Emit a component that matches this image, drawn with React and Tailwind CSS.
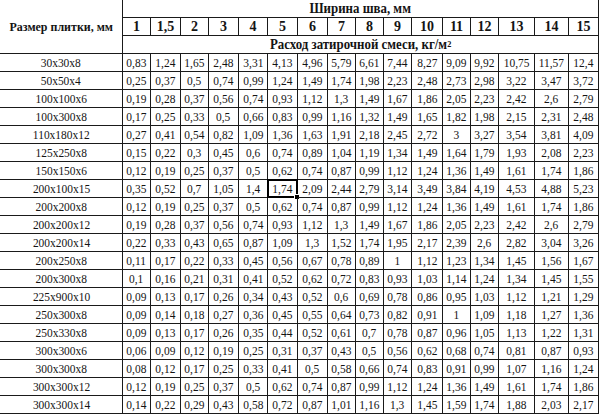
import React from "react";

const rows = [
  ["30x30x8", "0,83 1,24 1,65 2,48 3,31 4,13 4,96 5,79 6,61 7,44 8,27 9,09 9,92 10,75 11,57 12,4"],
  ["50x50x4", "0,25 0,37 0,5 0,74 0,99 1,24 1,49 1,74 1,98 2,23 2,48 2,73 2,98 3,22 3,47 3,72"],
  ["100x100x6", "0,19 0,28 0,37 0,56 0,74 0,93 1,12 1,3 1,49 1,67 1,86 2,05 2,23 2,42 2,6 2,79"],
  ["100x300x8", "0,17 0,25 0,33 0,5 0,66 0,83 0,99 1,16 1,32 1,49 1,65 1,82 1,98 2,15 2,31 2,48"],
  ["110x180x12", "0,27 0,41 0,54 0,82 1,09 1,36 1,63 1,91 2,18 2,45 2,72 3 3,27 3,54 3,81 4,09"],
  ["125x250x8", "0,15 0,22 0,3 0,45 0,6 0,74 0,89 1,04 1,19 1,34 1,49 1,64 1,79 1,93 2,08 2,23"],
  ["150x150x6", "0,12 0,19 0,25 0,37 0,5 0,62 0,74 0,87 0,99 1,12 1,24 1,36 1,49 1,61 1,74 1,86"],
  ["200x100x15", "0,35 0,52 0,7 1,05 1,4 1,74 2,09 2,44 2,79 3,14 3,49 3,84 4,19 4,53 4,88 5,23"],
  ["200x200x8", "0,12 0,19 0,25 0,37 0,5 0,62 0,74 0,87 0,99 1,12 1,24 1,36 1,49 1,61 1,74 1,86"],
  ["200x200x12", "0,19 0,28 0,37 0,56 0,74 0,93 1,12 1,3 1,49 1,67 1,86 2,05 2,23 2,42 2,6 2,79"],
  ["200x200x14", "0,22 0,33 0,43 0,65 0,87 1,09 1,3 1,52 1,74 1,95 2,17 2,39 2,6 2,82 3,04 3,26"],
  ["200x250x8", "0,11 0,17 0,22 0,33 0,45 0,56 0,67 0,78 0,89 1 1,12 1,23 1,34 1,45 1,56 1,67"],
  ["200x300x8", "0,1 0,16 0,21 0,31 0,41 0,52 0,62 0,72 0,83 0,93 1,03 1,14 1,24 1,34 1,45 1,55"],
  ["225x900x10", "0,09 0,13 0,17 0,26 0,34 0,43 0,52 0,6 0,69 0,78 0,86 0,95 1,03 1,12 1,21 1,29"],
  ["250x300x8", "0,09 0,14 0,18 0,27 0,36 0,45 0,55 0,64 0,73 0,82 0,91 1 1,09 1,18 1,27 1,36"],
  ["250x330x8", "0,09 0,13 0,17 0,26 0,35 0,44 0,52 0,61 0,7 0,78 0,87 0,96 1,05 1,13 1,22 1,31"],
  ["300x300x6", "0,06 0,09 0,12 0,19 0,25 0,31 0,37 0,43 0,5 0,56 0,62 0,68 0,74 0,81 0,87 0,93"],
  ["300x300x8", "0,08 0,12 0,17 0,25 0,33 0,41 0,5 0,58 0,66 0,74 0,83 0,91 0,99 1,07 1,16 1,24"],
  ["300x300x12", "0,12 0,19 0,25 0,37 0,5 0,62 0,74 0,87 0,99 1,12 1,24 1,36 1,49 1,61 1,74 1,86"],
  ["300x300x14", "0,14 0,22 0,29 0,43 0,58 0,72 0,87 1,01 1,16 1,3 1,45 1,59 1,74 1,88 2,03 2,17"],
];

const widths = ["1", "1,5", "2", "3", "4", "5", "6", "7", "8", "9", "10", "11", "12", "13", "14", "15"];

function T({ children }) {
  return <span className="inline-block scale-x-[0.88] whitespace-nowrap">{children}</span>;
}

function B({ children }) {
  return <span className="inline-block scale-x-[0.92] whitespace-nowrap font-bold">{children}</span>;
}

export default function App() {
  return (
    <div className="w-[600px] h-[415px] overflow-hidden bg-white text-[#141414] font-['Liberation_Serif',serif] text-[13px] leading-none">
      <div className="grid w-[599px] grid-cols-[123px_28px_30px_28px_30px_29px_30px_30px_28px_28px_28px_31px_28px_28px_36px_34px_30px] grid-rows-[18px_18px_18px] auto-rows-[18px]">
        <div className="row-span-3 flex items-center justify-center border-r border-b border-[#1a1a1a]">
          <B>Размер плитки, мм</B>
        </div>
        <div className="col-span-16 flex items-center justify-center border-r border-b border-[#1a1a1a] text-[14px]">
          <B>Ширина шва, мм</B>
        </div>
        {widths.map((w) => (
          <div key={w} className="flex items-center justify-center border-r border-b border-[#1a1a1a] text-[14px]">
            <span className="font-bold">{w}</span>
          </div>
        ))}
        <div className="col-span-16 flex items-center justify-center border-r border-b border-[#1a1a1a] text-[14px]">
          <B>
            Расход затирочной смеси, кг/м<sup className="text-[9px] relative -top-[2px]">2</sup>
          </B>
        </div>
        {rows.map(([name, vals], ri) => (
          <React.Fragment key={name}>
            <div className="flex items-center justify-center border-r border-b border-[#1a1a1a]">
              <T>{name}</T>
            </div>
            {vals.split(" ").map((v, ci) => (
              <div key={ci} className="relative flex items-center justify-center border-r border-b border-[#1a1a1a]">
                <T>{v}</T>
                {ri === 7 && ci === 5 && (
                  <div className="absolute -left-[1px] -top-[1px] w-[31px] h-[19px] border-2 border-black">
                    <div className="absolute -right-[4px] -bottom-[4px] w-[6px] h-[6px] bg-black border border-white" />
                  </div>
                )}
              </div>
            ))}
          </React.Fragment>
        ))}
      </div>
    </div>
  );
}
